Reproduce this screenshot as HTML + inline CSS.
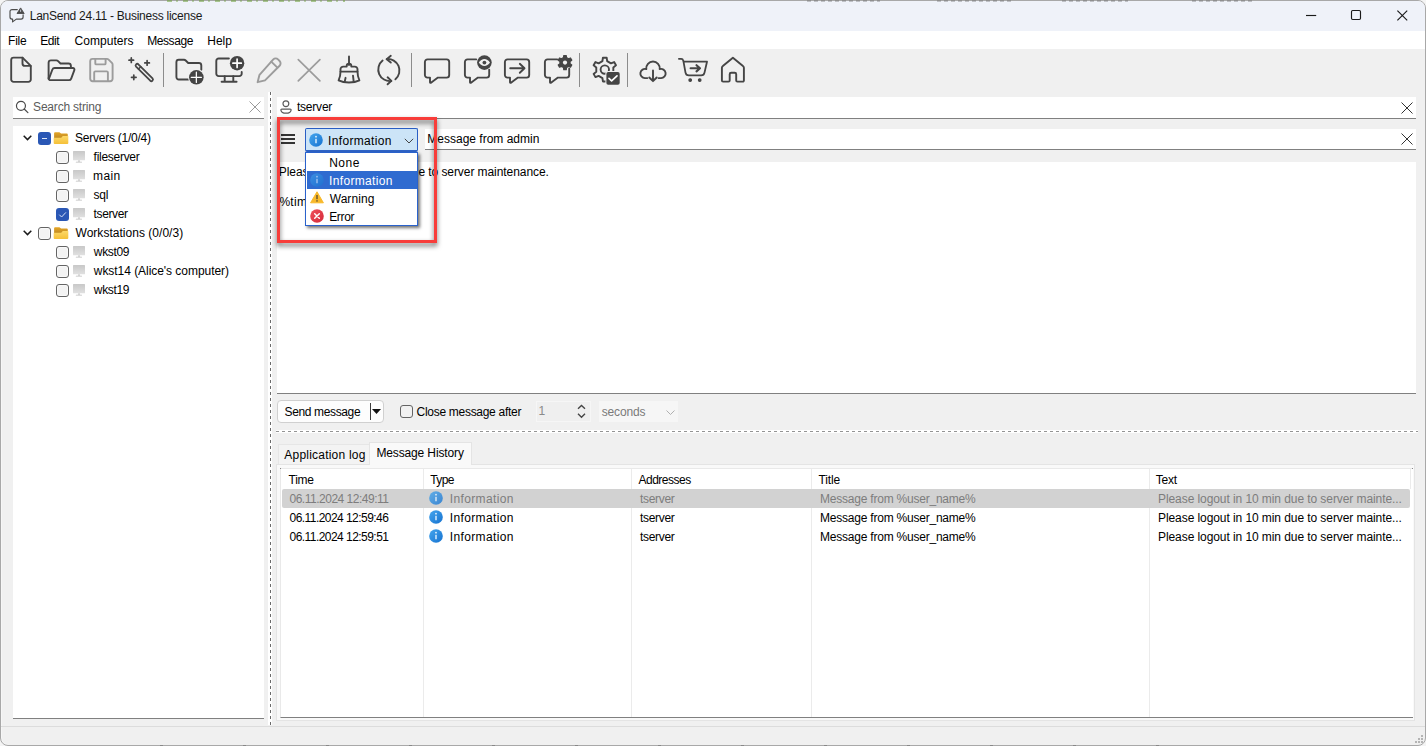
<!DOCTYPE html>
<html lang="en">
<head>
<meta charset="utf-8">
<title>LanSend 24.11 - Business license</title>
<style>
*{box-sizing:border-box}
html,body{margin:0;padding:0}
body{width:1426px;height:746px;overflow:hidden;background:#f4f4f4;font-family:"Liberation Sans",sans-serif;font-size:12px;color:#000;position:relative}
div,span,svg{position:absolute}
.t{white-space:nowrap;line-height:15px;height:15px}
svg{overflow:visible}
#win{left:0;top:0;width:1426px;height:746px;border:1px solid #a8a8a8;box-shadow:inset 1px 0 0 #f6f6f6;border-radius:8px;background:#f0f0f0;overflow:hidden}
#titlebar{left:0;top:0;width:1424px;height:30px;background:#eff2f9}
#menubar{left:0;top:30px;width:1424px;height:18px;background:#fff}
.ico{fill:none;stroke:#454545;stroke-width:1.9;stroke-linecap:round;stroke-linejoin:round}
.dis{stroke:#9c9c9c}
.sep{top:53px;width:1px;height:34px;background:#8c8c8c}
.edit{background:#fff;border-bottom:1px solid #808080}
.cb{width:13px;height:13px;border:1px solid #646464;border-radius:3px;background:#f3f3f3;box-shadow:inset 0 0 0 1px #f9f9f9}
.cbb{width:13px;height:13px;border-radius:3px;background:#2a57b5}
.x{stroke:#5a5a5a;stroke-width:1;fill:none}
.colsep{top:469px;width:1px;height:248px;background:#ebebeb}
</style>
</head>
<body>
<svg width="0" height="0" style="left:0;top:0"><defs><linearGradient id="gi" x1="0" y1="0" x2="1" y2="1"><stop offset="0" stop-color="#45a6ee"/><stop offset="1" stop-color="#1672d0"/></linearGradient><linearGradient id="gm" x1="0" y1="0" x2="0" y2="1"><stop offset="0" stop-color="#c8c8c8"/><stop offset="1" stop-color="#e0e0e0"/></linearGradient><linearGradient id="gf" x1="0" y1="0" x2="0" y2="1"><stop offset="0" stop-color="#fcd868"/><stop offset="1" stop-color="#f5c038"/></linearGradient><linearGradient id="gb" x1="0" y1="0" x2="0" y2="1"><stop offset="0" stop-color="#e6a626"/><stop offset="1" stop-color="#bd8822"/></linearGradient><linearGradient id="gr" x1="0" y1="0" x2="1" y2="1"><stop offset="0" stop-color="#f0505a"/><stop offset="1" stop-color="#d42a3a"/></linearGradient></defs></svg><div id="win">
 <div id="titlebar"></div>
 <div id="menubar"></div>
</div>

<div style="left:167px;top:0;width:178px;height:2px;background:repeating-linear-gradient(to right,rgba(110,160,60,.55) 0 5px,transparent 5px 9px,rgba(110,160,60,.4) 9px 11px,transparent 11px 16px)"></div>
<div style="left:160px;top:745px;width:1000px;height:1px;background:repeating-linear-gradient(to right,rgba(60,60,60,.3) 0 3px,transparent 3px 83px)"></div>
<div style="left:807px;top:0;width:73px;height:2px;background:repeating-linear-gradient(to right,rgba(90,90,90,.32) 0 4px,transparent 4px 7px)"></div>
<div style="left:937px;top:0;width:75px;height:2px;background:repeating-linear-gradient(to right,rgba(90,90,90,.32) 0 4px,transparent 4px 7px)"></div>
<div style="left:1062px;top:0;width:66px;height:2px;background:repeating-linear-gradient(to right,rgba(90,90,90,.32) 0 4px,transparent 4px 7px)"></div>
<div style="left:1192px;top:0;width:60px;height:2px;background:repeating-linear-gradient(to right,rgba(90,90,90,.32) 0 4px,transparent 4px 7px)"></div>
<!-- title bar -->
<svg id="appicon" style="left:8px;top:6px" width="18" height="18" viewBox="0 0 18 18">
 <path d="M9.300 3.600H4a2 2 0 0 0-2 2v5.500a2 2 0 0 0 2 2h.6v2.800l3.700-2.800h4.800a2 2 0 0 0 2-2V8.700" fill="none" stroke="#4c4c4c" stroke-width="1.150" stroke-linejoin="round" stroke-linecap="round"/>
 <path d="M12.600 1.900 16.200 7.500H9z" fill="#4c4c4c" stroke="#4c4c4c" stroke-width=".9" stroke-linejoin="round"/>
 <path d="M12.600 3.600v2.300" stroke="#dfe3ee" stroke-width=".8"/>
</svg>
<span class="t" style="left:29.8px;top:9px;letter-spacing:-0.260px;color:#1a1a1a;">LanSend 24.11 - Business license</span>
<svg style="left:1300px;top:5px" width="120" height="22" viewBox="0 0 120 22">
 <path d="M6 10.5h10.2" stroke="#1a1a1a" stroke-width="1.150" fill="none"/>
 <rect x="51.5" y="5.5" width="9" height="9" rx="1.2" stroke="#1a1a1a" stroke-width="1.150" fill="none"/>
 <path d="M97.4 5.6l9.8 9.8M107.2 5.6l-9.8 9.8" stroke="#1a1a1a" stroke-width="1.150" fill="none"/>
</svg>

<!-- menu -->
<span class="t" style="left:8.1px;top:34px;letter-spacing:-0.275px;">File</span>
<span class="t" style="left:40.3px;top:34px;letter-spacing:-0.438px;">Edit</span>
<span class="t" style="left:74.5px;top:34px;letter-spacing:0.044px;">Computers</span>
<span class="t" style="left:147.2px;top:34px;letter-spacing:-0.414px;">Message</span>
<span class="t" style="left:207.2px;top:34px;letter-spacing:0.034px;">Help</span>

<!-- toolbar -->
<div id="toolbar" style="left:0;top:0;width:0;height:0">
<svg style="left:5px;top:54px" width="32" height="32" viewBox="0 0 32 32"><g class="ico"><path d="M8.600 3.600h8.900l8.300 8.300v13.600a2.400 2.400 0 0 1-2.400 2.400H8.600a2.400 2.400 0 0 1-2.400-2.400V6a2.400 2.400 0 0 1 2.400-2.400z"/><path d="M17.500 3.800v5.700a2.400 2.400 0 0 0 2.400 2.400h5.700"/></g></svg>
<svg style="left:45px;top:54px" width="32" height="32" viewBox="0 0 32 32"><g class="ico"><path d="M3.600 24.500V8.800a2.400 2.400 0 0 1 2.400-2.400h5.400a2.400 2.400 0 0 1 1.700.7l2.400 2.400h8a2.400 2.400 0 0 1 2.400 2.400v2"/><path d="M3.800 25.200l3.600-9.700a2.400 2.400 0 0 1 2.250-1.560h18.200a1.600 1.600 0 0 1 1.500 2.160l-3.150 8.500a2.400 2.400 0 0 1-2.250 1.560H5.800a2.200 2.200 0 0 1-2.200-2.200"/></g></svg>
<svg style="left:85px;top:54px" width="32" height="32" viewBox="0 0 32 32"><g class="ico dis"><path d="M7.600 4.900h14.300a2.400 2.400 0 0 1 1.700.7l3.300 3.300a2.400 2.400 0 0 1 .7 1.700v14.200a2.400 2.400 0 0 1-2.400 2.400H7.600a2.400 2.400 0 0 1-2.400-2.400V7.300a2.400 2.400 0 0 1 2.400-2.400z"/><path d="M10.300 5v4.400a1 1 0 0 0 1 1h8.300a1 1 0 0 0 1-1V5"/><path d="M9.200 27v-8.400a1.200 1.200 0 0 1 1.200-1.200h11.300a1.200 1.200 0 0 1 1.200 1.200V27"/></g></svg>
<svg style="left:125px;top:54px" width="32" height="32" viewBox="0 0 32 32"><g class="ico"><path d="M11.070 12.530a1.600 1.600 0 0 1 2.260-2.260l14.200 14.200a1.600 1.600 0 0 1-2.260 2.260z" stroke-width="1.800"/><path d="M15.800 12.700l-2.300 2.300" stroke-width="1.500"/><path d="M6.300 3.900v4.600M4 6.200h4.600M22.100 6.600v4.600M19.800 8.900h4.600M8.800 21v4.600M6.500 23.300h4.600" stroke-width="1.700"/></g></svg>
<div class="sep" style="left:163px"></div>
<svg style="left:173px;top:54px" width="32" height="32" viewBox="0 0 32 32"><g class="ico"><path d="M15.500 25.500H5.800a2.400 2.400 0 0 1-2.400-2.400V8.200a2.400 2.400 0 0 1 2.400-2.400h5.200a2.400 2.400 0 0 1 1.700.7l2.500 2.500h10.700a2.400 2.400 0 0 1 2.400 2.400v4.400" stroke-width="1.900"/><circle cx="23.350" cy="23.300" r="8.300" fill="#f0f0f0" stroke="none"/><circle cx="23.350" cy="23.300" r="7.300" fill="#454545" stroke="none"/><path d="M23.350 18.200v10.200M18.250 23.300h10.200" stroke="#fff" stroke-width="1.250"/></g></svg>
<svg style="left:213px;top:54px" width="32" height="32" viewBox="0 0 32 32"><g class="ico"><path d="M15.900 4.500H5.700a2.400 2.400 0 0 0-2.400 2.400v12.800a2.400 2.400 0 0 0 2.400 2.400h20.600a2.400 2.400 0 0 0 2.400-2.400V17.900" stroke-width="1.900"/><path d="M11.700 22.300v5.300M20.300 22.300v5.300M8.600 27.700h15" stroke-width="1.900"/><circle cx="24.100" cy="9.200" r="8.200" fill="#f0f0f0" stroke="none"/><circle cx="24.100" cy="9.200" r="7.200" fill="#454545" stroke="none"/><path d="M24.100 5v8.400M19.900 9.200h8.400" stroke="#fff" stroke-width="1.700"/></g></svg>
<svg style="left:253px;top:54px" width="32" height="32" viewBox="0 0 32 32"><g class="ico dis"><path d="M20.300 5.400a3.300 3.300 0 0 1 4.700 0l1.600 1.600a3.300 3.300 0 0 1 0 4.700L12 26.300l-7.400 1.900 1.900-7.400z"/><path d="M18.300 7.600l6.100 6.100" /></g></svg>
<svg style="left:293px;top:54px" width="32" height="32" viewBox="0 0 32 32"><g class="ico dis"><path d="M5.300 5.600l21.600 21.300M26.900 5.600L5.300 26.900" stroke-width="1.700"/></g></svg>
<svg style="left:333px;top:54px" width="32" height="32" viewBox="0 0 32 32"><g class="ico"><path d="M16 2.400v8.600"/><path d="M7.500 17.600v-2.300a2.700 2.700 0 0 1 2.700-2.700h3.500v-.6a2.300 2.300 0 0 1 4.600 0v.6h3.500a2.700 2.700 0 0 1 2.700 2.700v2.300z"/><path d="M7.500 17.600c0 3.500-.6 6.200-1.900 8.800 3 1.500 6.600 2.100 10.400 2.100s7.400-.6 10.400-2.100c-1.300-2.600-1.900-5.300-1.900-8.800"/><path d="M11.700 27.600l.9-3.800M20.700 27.600l-.7-6"/></g></svg>
<svg style="left:373px;top:54px" width="32" height="32" viewBox="0 0 32 32"><g class="ico"><g stroke-width="1.900"><path d="M13.700 5.100A11.500 11.500 0 0 1 22.400 25.300"/><path d="M17.800 1.800l-4.100 3.400 4.100 3.400"/><path d="M9.600 6.600A11.500 11.500 0 0 0 18.200 27"/><path d="M14.600 23.300l3.800 3.600-3.800 3.400"/></g></g></svg>
<div class="sep" style="left:411px"></div>
<svg style="left:421px;top:54px" width="32" height="32" viewBox="0 0 32 32"><g class="ico"><path d="M6.500 5.400h19.100a2.600 2.600 0 0 1 2.600 2.600v13a2.600 2.600 0 0 1-2.600 2.600h-8.700l-6.900 5.100a.6.600 0 0 1-1-.5v-4.600h-2.500a2.600 2.600 0 0 1-2.600-2.600v-13a2.600 2.600 0 0 1 2.600-2.600z" stroke-width="1.900"/></g></svg>
<svg style="left:461px;top:54px" width="32" height="32" viewBox="0 0 32 32"><g class="ico"><path d="M15.200 5.400H6.500a2.600 2.600 0 0 0-2.600 2.600v13a2.600 2.600 0 0 0 2.600 2.600h2.500v4.600a.6.600 0 0 0 1 .5l6.900-5.100h8.700a2.600 2.600 0 0 0 2.600-2.600V15.600" stroke-width="1.900"/><circle cx="23.400" cy="8.600" r="7.300" fill="#454545" stroke="none"/><path d="M17.800 8.600c1.500-2.300 3.500-3.500 5.600-3.500s4.100 1.200 5.600 3.500c-1.500 2.300-3.500 3.500-5.600 3.500s-4.100-1.200-5.600-3.500z" fill="#f0f0f0" stroke="none"/><circle cx="23.400" cy="8.600" r="1.900" fill="#454545" stroke="none"/></g></svg>
<svg style="left:501px;top:54px" width="32" height="32" viewBox="0 0 32 32"><g class="ico"><path d="M6.500 5.400h19.100a2.600 2.600 0 0 1 2.600 2.600v13a2.600 2.600 0 0 1-2.600 2.600h-8.700l-6.900 5.100a.6.600 0 0 1-1-.5v-4.600h-2.500a2.600 2.600 0 0 1-2.600-2.600v-13a2.600 2.600 0 0 1 2.600-2.600z" stroke-width="1.900"/><path d="M9.200 14.300h14M18.800 9.800l4.700 4.500-4.700 4.500" stroke-width="1.900"/></g></svg>
<svg style="left:541px;top:54px" width="32" height="32" viewBox="0 0 32 32"><g class="ico"><path d="M16.200 5.400H6.500a2.600 2.600 0 0 0-2.600 2.600v13a2.600 2.600 0 0 0 2.600 2.600h2.500v4.600a.6.600 0 0 0 1 .5l6.900-5.100h8.700a2.600 2.600 0 0 0 2.600-2.600V14.600" stroke-width="1.900"/><path d="M22.50 3.64L22.72 1.51L25.28 1.51L25.50 3.64L27.55 4.82L29.50 3.95L30.77 6.16L29.05 7.42L29.05 9.78L30.77 11.04L29.50 13.25L27.55 12.38L25.50 13.56L25.28 15.69L22.72 15.69L22.50 13.56L20.45 12.38L18.50 13.25L17.23 11.04L18.95 9.78L18.95 7.42L17.23 6.16L18.50 3.95L20.45 4.82z" fill="#454545" stroke="#454545" stroke-width="1.2"/><circle cx="24.00" cy="8.60" r="2.09" fill="#f0f0f0" stroke="none"/></g></svg>
<div class="sep" style="left:579px"></div>
<svg style="left:589px;top:54px" width="32" height="32" viewBox="0 0 32 32"><g class="ico"><path d="M13.43 7.12L13.92 3.75L17.68 3.75L18.17 7.12L21.96 9.31L25.13 8.05L27.00 11.30L24.32 13.41L24.32 17.79L27.00 19.90L25.13 23.15L21.96 21.89L18.17 24.08L17.68 27.45L13.92 27.45L13.43 24.08L9.64 21.89L6.47 23.15L4.60 19.90L7.28 17.79L7.28 13.41L4.60 11.30L6.47 8.05L9.64 9.31z" stroke-width="1.900"/><circle cx="15.80" cy="15.60" r="4.200" stroke-width="1.900"/><rect x="16.400" y="17.100" width="15.300" height="14.600" rx="2.500" fill="#f0f0f0" stroke="none"/><rect x="17.400" y="18.100" width="13.300" height="12.600" rx="1.800" fill="#454545" stroke="none"/><path d="M20 24.400l2.600 2.500 5.400-5" stroke="#fff" stroke-width="1.700"/></g></svg>
<div class="sep" style="left:627px"></div>
<svg style="left:637px;top:54px" width="32" height="32" viewBox="0 0 32 32"><g class="ico"><path d="M10.400 24.100H7.900A4.600 4.600 0 1 1 9.300 15.100A6.750 6.750 0 1 1 22.700 15.100A4.600 4.600 0 1 1 24.100 24.100H21.600" stroke-width="1.900"/><path d="M16 16.400V27M12.300 23.500l3.700 3.700 3.700-3.700" stroke-width="1.900"/></g></svg>
<svg style="left:677px;top:54px" width="32" height="32" viewBox="0 0 32 32"><g class="ico"><path d="M1.900 4.800h2.300a2 2 0 0 1 1.950 1.550L6.500 7.700l2 10.900a3.400 3.400 0 0 0 3.350 2.800h12.300a3.400 3.400 0 0 0 3.350-2.800L30 7.700H6.600" stroke-width="1.800"/><circle cx="13.200" cy="26.100" r="1.300" fill="#454545" stroke-width="1.200"/><circle cx="22.700" cy="26.100" r="1.300" fill="#454545" stroke-width="1.200"/><path d="M13.600 14.300h9M19.500 11.200l3.500 3.100-3.500 3.100" stroke-width="2.100"/></g></svg>
<svg style="left:717px;top:54px" width="32" height="32" viewBox="0 0 32 32"><g class="ico"><path d="M4.900 13.800a2.400 2.400 0 0 1 .95-1.900L15.900 3.800l10.050 8.100a2.400 2.400 0 0 1 .95 1.900V26.400a1.200 1.200 0 0 1-1.200 1.200h-5.300a1.200 1.200 0 0 1-1.200-1.200V20.200a1.500 1.500 0 0 0-1.500-1.500h-3.500a1.500 1.500 0 0 0-1.500 1.500v6.200a1.200 1.200 0 0 1-1.200 1.200H6.100a1.200 1.200 0 0 1-1.200-1.200z" stroke-width="1.900"/></g></svg>
</div>

<!-- left panel -->
<div class="edit" style="left:13px;top:97px;width:251px;height:22px"></div>
<svg style="left:15px;top:100px" width="14" height="14" viewBox="0 0 14 14"><circle cx="5.950" cy="5.800" r="4.500" class="x" style="stroke:#4a4a4a;stroke-width:1.200"/><path d="M9.200 9l3.700 3.700" class="x" style="stroke:#4a4a4a;stroke-width:1.200;stroke-linecap:round"/></svg>
<span class="t" style="left:33.1px;top:100px;letter-spacing:-0.199px;color:#5c5c5c;">Search string</span>
<svg style="left:249px;top:101px" width="12" height="12" viewBox="0 0 12 12"><path d="M.5.5l11 11M11.500 .5l-11 11" class="x" style="stroke:#9a9a9a"/></svg>
<div id="tree" style="left:13px;top:126px;width:251px;height:593px;background:#fff;border-bottom:1px solid #808080"></div>
<svg style="left:23.2px;top:135.2px" width="9" height="6" viewBox="0 0 9 6"><path d="M.7.800l3.800 3.800 3.800-3.800" fill="none" stroke="#1a1a1a" stroke-width="1.500"/></svg>
<div class="cbb" style="left:38px;top:132px"></div><div style="left:42px;top:138px;width:5px;height:1px;background:#e0e8f8"></div>
<svg style="left:53.0px;top:132.1px" width="16" height="12" viewBox="0 0 16 12"><path d="M1.100 1.200a1 1 0 0 1 1-1h4.300l1.700 1.400h5.700a1 1 0 0 1 1 1V6.500H1.100z" fill="url(#gb)"/><path d="M.7 5.700H8.200l1.600-1.600H15.300v6.900a1 1 0 0 1-1 1H1.700a1 1 0 0 1-1-1z" fill="url(#gf)"/></svg>
<span class="t" style="left:75.1px;top:131px;letter-spacing:-0.248px;">Servers (1/0/4)</span>
<div class="cb" style="left:56px;top:151px"></div>
<svg style="left:73.0px;top:151.3px" width="12" height="12" viewBox="0 0 12 12"><rect x="0" y="0" width="12" height="9.300" rx=".5" fill="url(#gm)"/><rect x="5.200" y="9.300" width="1.600" height="1.500" fill="#c8c8c8"/><rect x="2.800" y="10.700" width="6.200" height=".9" rx=".4" fill="#bcbcbc"/></svg>
<span class="t" style="left:93.6px;top:150px;letter-spacing:-0.280px;">fileserver</span>
<div class="cb" style="left:56px;top:170px"></div>
<svg style="left:73.0px;top:170.3px" width="12" height="12" viewBox="0 0 12 12"><rect x="0" y="0" width="12" height="9.300" rx=".5" fill="url(#gm)"/><rect x="5.200" y="9.300" width="1.600" height="1.500" fill="#c8c8c8"/><rect x="2.800" y="10.700" width="6.200" height=".9" rx=".4" fill="#bcbcbc"/></svg>
<span class="t" style="left:93.0px;top:169px;letter-spacing:0.387px;">main</span>
<div class="cb" style="left:56px;top:189px"></div>
<svg style="left:73.0px;top:189.3px" width="12" height="12" viewBox="0 0 12 12"><rect x="0" y="0" width="12" height="9.300" rx=".5" fill="url(#gm)"/><rect x="5.200" y="9.300" width="1.600" height="1.500" fill="#c8c8c8"/><rect x="2.800" y="10.700" width="6.200" height=".9" rx=".4" fill="#bcbcbc"/></svg>
<span class="t" style="left:93.5px;top:188px;letter-spacing:-0.204px;">sql</span>
<div class="cbb" style="left:56px;top:208px"></div><svg style="left:56px;top:208px" width="13" height="13" viewBox="0 0 13 13"><path d="M3.300 6.700l2.300 2.300 4.300-4.600" fill="none" stroke="#dde7fb" stroke-width=".95"/></svg>
<svg style="left:73.0px;top:208.3px" width="12" height="12" viewBox="0 0 12 12"><rect x="0" y="0" width="12" height="9.300" rx=".5" fill="url(#gm)"/><rect x="5.200" y="9.300" width="1.600" height="1.500" fill="#c8c8c8"/><rect x="2.800" y="10.700" width="6.200" height=".9" rx=".4" fill="#bcbcbc"/></svg>
<span class="t" style="left:93.6px;top:207px;letter-spacing:-0.384px;">tserver</span>
<svg style="left:23.2px;top:230.2px" width="9" height="6" viewBox="0 0 9 6"><path d="M.7.800l3.800 3.800 3.800-3.800" fill="none" stroke="#1a1a1a" stroke-width="1.500"/></svg>
<div class="cb" style="left:38px;top:227px"></div>
<svg style="left:53.0px;top:227.1px" width="16" height="12" viewBox="0 0 16 12"><path d="M1.100 1.200a1 1 0 0 1 1-1h4.300l1.700 1.400h5.700a1 1 0 0 1 1 1V6.500H1.100z" fill="url(#gb)"/><path d="M.7 5.700H8.200l1.600-1.600H15.300v6.900a1 1 0 0 1-1 1H1.700a1 1 0 0 1-1-1z" fill="url(#gf)"/></svg>
<span class="t" style="left:75.5px;top:226px;letter-spacing:0.028px;">Workstations (0/0/3)</span>
<div class="cb" style="left:56px;top:246px"></div>
<svg style="left:73.0px;top:246.3px" width="12" height="12" viewBox="0 0 12 12"><rect x="0" y="0" width="12" height="9.300" rx=".5" fill="url(#gm)"/><rect x="5.200" y="9.300" width="1.600" height="1.500" fill="#c8c8c8"/><rect x="2.800" y="10.700" width="6.200" height=".9" rx=".4" fill="#bcbcbc"/></svg>
<span class="t" style="left:93.8px;top:245px;letter-spacing:-0.322px;">wkst09</span>
<div class="cb" style="left:56px;top:265px"></div>
<svg style="left:73.0px;top:265.3px" width="12" height="12" viewBox="0 0 12 12"><rect x="0" y="0" width="12" height="9.300" rx=".5" fill="url(#gm)"/><rect x="5.200" y="9.300" width="1.600" height="1.500" fill="#c8c8c8"/><rect x="2.800" y="10.700" width="6.200" height=".9" rx=".4" fill="#bcbcbc"/></svg>
<span class="t" style="left:93.8px;top:264px;letter-spacing:-0.047px;">wkst14 (Alice's computer)</span>
<div class="cb" style="left:56px;top:284px"></div>
<svg style="left:73.0px;top:284.3px" width="12" height="12" viewBox="0 0 12 12"><rect x="0" y="0" width="12" height="9.300" rx=".5" fill="url(#gm)"/><rect x="5.200" y="9.300" width="1.600" height="1.500" fill="#c8c8c8"/><rect x="2.800" y="10.700" width="6.200" height=".9" rx=".4" fill="#bcbcbc"/></svg>
<span class="t" style="left:93.8px;top:283px;letter-spacing:-0.322px;">wkst19</span>

<!-- splitter -->
<div style="left:268px;top:92px;width:4px;height:633px;background:#fff"></div>
<div style="left:270px;top:92px;width:1px;height:633px;background:repeating-linear-gradient(to bottom,#6a6a6a 0 3px,transparent 3px 6px)"></div>

<!-- right panel -->
<div class="edit" style="left:277px;top:97px;width:1139px;height:22px"></div>
<svg style="left:280px;top:100px" width="12" height="14" viewBox="0 0 12 14"><circle cx="5.900" cy="3.700" r="2.900" class="x" style="stroke-width:1.200"/><path d="M1.800 9.100h8.400a.9.900 0 0 1 .9 1c-.3 1.900-2.400 3.100-5.100 3.100s-4.800-1.200-5.100-3.100a.9.900 0 0 1 .9-1z" class="x" style="stroke-width:1.200"/></svg>
<span class="t" style="left:296.9px;top:100px;letter-spacing:-0.201px;">tserver</span>
<svg style="left:1401px;top:101.500px" width="12" height="12" viewBox="0 0 12 12"><path d="M.5.5l11 11M11.500 .5l-11 11" class="x" style="stroke:#333"/></svg>

<div class="edit" style="left:425px;top:129px;width:991px;height:21px"></div>
<span class="t" style="left:427.3px;top:132px;letter-spacing:0.001px;">Message from admin</span>
<svg style="left:1401px;top:133px" width="12" height="12" viewBox="0 0 12 12"><path d="M.5.5l11 11M11.500 .5l-11 11" class="x" style="stroke:#333"/></svg>

<div id="msgbody" class="edit" style="left:277px;top:162px;width:1139px;height:232px"></div>
<span class="t" style="left:278.8px;top:165px;letter-spacing:-0.070px;">Please logout in 10 min due to server maintenance.</span>
<span class="t" style="left:279.4px;top:195px;letter-spacing:0.308px;">%time%</span>

<!-- hamburger -->
<div style="left:281px;top:134px;width:14px;height:2px;background:#333"></div>
<div style="left:281px;top:138px;width:14px;height:2px;background:#333"></div>
<div style="left:281px;top:142px;width:14px;height:2px;background:#333"></div>

<!-- combo -->
<div id="combo" style="left:305px;top:128px;width:113px;height:24px;background:#cce4f7;border:1px solid #2a5ec4;border-bottom:2px solid #2f63c6;border-radius:2px"></div>
<svg style="left:309.0px;top:132.8px;opacity:1.0" width="14" height="14" viewBox="-7 -7 14 14"><circle r="6.80" fill="url(#gi)"/><rect x="-0.700" y="-1.200" width="1.400" height="4.400" rx=".3" fill="#e3f2ff"/><circle cy="-3.300" r=".9" fill="#e3f2ff"/></svg>
<span class="t" style="left:328.1px;top:134px;letter-spacing:0.326px;">Information</span>
<svg style="left:404px;top:138px" width="10" height="6" viewBox="0 0 10 6"><path d="M.8.800l4.200 4.200 4.200-4.200" fill="none" stroke="#444" stroke-width="1"/></svg>

<!-- dropdown list -->
<div id="ddl" style="left:305px;top:152px;width:113px;height:74px;background:#fff;border:1px solid #2a62cc;box-shadow:2px 2px 3px rgba(0,0,0,.55)"></div>
<div style="left:307px;top:171px;width:110px;height:18px;background:#2f6bd0"></div>
<span class="t" style="left:329.2px;top:156px;letter-spacing:0.477px;">None</span>
<span class="t" style="left:329.1px;top:174px;letter-spacing:0.326px;color:#fff;">Information</span>
<span class="t" style="left:329.7px;top:192px;letter-spacing:0.063px;">Warning</span>
<span class="t" style="left:329.2px;top:210px;letter-spacing:-0.347px;">Error</span>
<svg style="left:310.0px;top:173.0px;opacity:0.62" width="14" height="14" viewBox="-7 -7 14 14"><circle r="6.80" fill="url(#gi)"/><rect x="-0.700" y="-1.200" width="1.400" height="4.400" rx=".3" fill="#e3f2ff"/><circle cy="-3.300" r=".9" fill="#e3f2ff"/></svg>
<svg style="left:310px;top:191px" width="14" height="13" viewBox="0 0 14 13"><path d="M7 .8 13.400 11.800H.6z" fill="#f8b92a" stroke="#f8b92a" stroke-width="1" stroke-linejoin="round"/><rect x="6.400" y="4" width="1.200" height="4.200" fill="#4a4030"/><rect x="6.400" y="9.200" width="1.200" height="1.400" fill="#4a4030"/></svg>
<svg style="left:310px;top:209px" width="14" height="14" viewBox="-7 -7 14 14"><circle r="6.800" fill="url(#gr)"/><path d="M-2.300-2.300l4.600 4.600M2.300-2.300l-4.600 4.600" stroke="#fff" stroke-width="1.500" stroke-linecap="round"/></svg>

<!-- red highlight -->
<svg style="left:277px;top:117px;filter:drop-shadow(.5px 3px 2.8px rgba(0,0,0,.6))" width="160" height="126" viewBox="0 0 160 126"><rect x="1.5" y="1.5" width="157" height="123" fill="none" stroke="#f83d3a" stroke-width="3"/></svg>

<!-- send row -->
<div style="left:277px;top:400px;width:107px;height:23px;background:#fdfdfd;border:1px solid #d0d0d0;border-radius:4px"></div>
<span class="t" style="left:284.6px;top:405px;letter-spacing:-0.371px;">Send message</span>
<div style="left:370px;top:403px;width:1px;height:17px;background:#3c3c3c"></div>
<svg style="left:372px;top:409px" width="9" height="5" viewBox="0 0 9 5"><path d="M0 0h9L4.500 5z" fill="#111"/></svg>
<div class="cb" style="left:400px;top:405px;background:#f1f1f1;box-shadow:none"></div>
<span class="t" style="left:416.6px;top:405px;letter-spacing:-0.292px;">Close message after</span>
<div style="left:536px;top:401px;width:55px;height:21px;background:#efefef;border:1px solid #f6f6f6"></div>
<span class="t" style="left:538.4px;top:404px;letter-spacing:-1.188px;color:#8a8a8a;">1</span>
<svg style="left:577px;top:404px" width="9" height="14" viewBox="0 0 9 14"><path d="M1 4.800l3.500-3.400 3.500 3.400M1 9.800l3.500 3.400 3.500-3.400" fill="none" stroke="#444" stroke-width="1.350"/></svg>
<div style="left:599px;top:401px;width:79px;height:21px;background:#f6f6f6"></div>
<span class="t" style="left:601.7px;top:405px;letter-spacing:-0.156px;color:#7a7a7a;">seconds</span>
<svg style="left:666px;top:410px" width="9" height="5" viewBox="0 0 9 5"><path d="M.5.500l4 4 4-4" fill="none" stroke="#b0b0b0" stroke-width="1"/></svg>

<!-- horizontal splitter -->
<div style="left:276px;top:430px;width:1142px;height:3px;background:#fff"></div>
<div style="left:276px;top:431px;width:1142px;height:1px;background:repeating-linear-gradient(to right,#949494 0 3px,transparent 3px 6px)"></div>

<!-- tabs -->
<div style="left:278px;top:444px;width:92px;height:21px;background:#f3f3f3;border:1px solid #e6e6e6;border-bottom:none"></div>
<div style="left:276px;top:464px;width:1139px;height:257px;background:#f9f9f9;border:1px solid #e4e4e4"></div>
<div style="left:369px;top:442px;width:103px;height:23px;background:#f9f9f9;border:1px solid #e4e4e4;border-bottom:none"></div>
<span class="t" style="left:284.3px;top:448px;letter-spacing:0.217px;">Application log</span>
<span class="t" style="left:376.4px;top:446px;letter-spacing:-0.133px;">Message History</span>

<!-- table -->
<div id="table" style="left:280px;top:468px;width:1133px;height:250px;background:#fff;border-top:1px solid #e9e9e9;border-left:1px solid #e9e9e9;border-bottom:1px solid #808080"></div>
<div style="left:280px;top:468px;width:1px;height:1px;background:#8a8a8a"></div>
<div style="left:1412px;top:468px;width:1px;height:1px;background:#8a8a8a"></div>
<div class="colsep" style="left:423px"></div>
<div class="colsep" style="left:631px"></div>
<div class="colsep" style="left:811px"></div>
<div class="colsep" style="left:1149px"></div>
<div class="colsep" style="left:1410px;height:20px"></div>
<div style="left:282px;top:489px;width:1128px;height:19px;background:#d2d2d2;border-radius:2px"></div>
<span class="t" style="left:288.5px;top:473px;letter-spacing:-0.244px;">Time</span>
<span class="t" style="left:430.2px;top:473px;letter-spacing:-0.571px;">Type</span>
<span class="t" style="left:638.5px;top:473px;letter-spacing:-0.506px;">Addresses</span>
<span class="t" style="left:818.6px;top:473px;letter-spacing:-0.183px;">Title</span>
<span class="t" style="left:1155.7px;top:473px;letter-spacing:-0.219px;">Text</span>
<span class="t" style="left:289.5px;top:492px;letter-spacing:-0.493px;color:#7d7d7d;">06.11.2024 12:49:11</span>
<svg style="left:428.9px;top:491.4px;opacity:0.8" width="14" height="14" viewBox="-7 -7 14 14"><circle r="6.85" fill="url(#gi)"/><rect x="-0.700" y="-1.200" width="1.400" height="4.400" rx=".3" fill="#e3f2ff"/><circle cy="-3.300" r=".9" fill="#e3f2ff"/></svg>
<span class="t" style="left:449.7px;top:492px;letter-spacing:0.376px;color:#7d7d7d;">Information</span>
<span class="t" style="left:640.0px;top:492px;letter-spacing:-0.301px;color:#7d7d7d;">tserver</span>
<span class="t" style="left:820.0px;top:492px;letter-spacing:-0.218px;color:#7d7d7d;">Message from %user_name%</span>
<span class="t" style="left:1158.0px;top:492px;letter-spacing:-0.078px;color:#7d7d7d;">Please logout in 10 min due to server mainte...</span>
<span class="t" style="left:289.5px;top:511px;letter-spacing:-0.546px;">06.11.2024 12:59:46</span>
<svg style="left:428.9px;top:510.4px;opacity:1" width="14" height="14" viewBox="-7 -7 14 14"><circle r="6.85" fill="url(#gi)"/><rect x="-0.700" y="-1.200" width="1.400" height="4.400" rx=".3" fill="#e3f2ff"/><circle cy="-3.300" r=".9" fill="#e3f2ff"/></svg>
<span class="t" style="left:449.7px;top:511px;letter-spacing:0.376px;">Information</span>
<span class="t" style="left:640.0px;top:511px;letter-spacing:-0.301px;">tserver</span>
<span class="t" style="left:820.0px;top:511px;letter-spacing:-0.218px;">Message from %user_name%</span>
<span class="t" style="left:1158.0px;top:511px;letter-spacing:-0.078px;">Please logout in 10 min due to server mainte...</span>
<span class="t" style="left:289.5px;top:530px;letter-spacing:-0.542px;">06.11.2024 12:59:51</span>
<svg style="left:428.9px;top:529.4px;opacity:1" width="14" height="14" viewBox="-7 -7 14 14"><circle r="6.85" fill="url(#gi)"/><rect x="-0.700" y="-1.200" width="1.400" height="4.400" rx=".3" fill="#e3f2ff"/><circle cy="-3.300" r=".9" fill="#e3f2ff"/></svg>
<span class="t" style="left:449.7px;top:530px;letter-spacing:0.376px;">Information</span>
<span class="t" style="left:640.0px;top:530px;letter-spacing:-0.301px;">tserver</span>
<span class="t" style="left:820.0px;top:530px;letter-spacing:-0.218px;">Message from %user_name%</span>
<span class="t" style="left:1158.0px;top:530px;letter-spacing:-0.078px;">Please logout in 10 min due to server mainte...</span>

<!-- status bar -->
<div style="left:1px;top:726px;width:1424px;height:1px;background:#dcdcdc"></div>
<svg style="left:1415px;top:735px" width="9" height="9" viewBox="0 0 9 9"><g fill="#b4b4b4"><rect x="6" y="0" width="2" height="2"/><rect x="3" y="3" width="2" height="2"/><rect x="6" y="3" width="2" height="2"/><rect x="0" y="6" width="2" height="2"/><rect x="3" y="6" width="2" height="2"/><rect x="6" y="6" width="2" height="2"/></g></svg>

</body>
</html>
